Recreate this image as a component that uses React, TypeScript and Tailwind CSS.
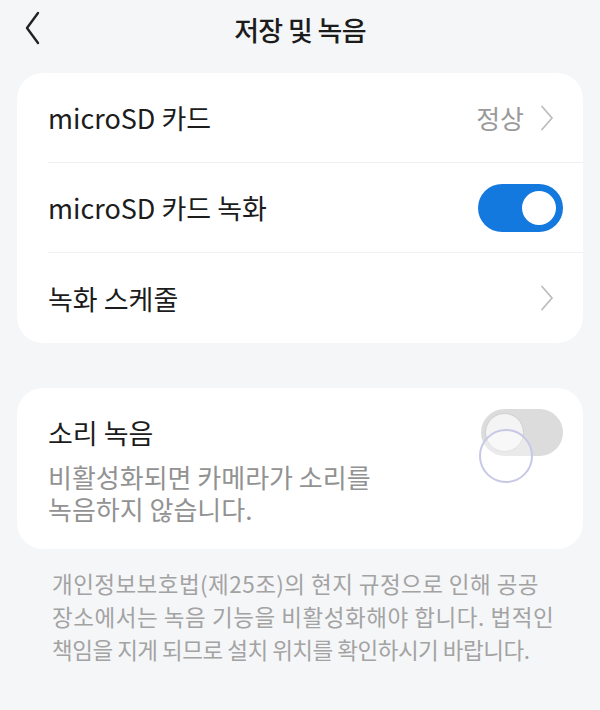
const font = { fontFamily: '"Noto Sans CJK KR", "Noto Sans", sans-serif' };

const Chevron = () => (
  <svg width="14" height="26" viewBox="0 0 14 26" fill="none" className="shrink-0">
    <path d="M2 1.5 L12 13 L2 24.5" stroke="#bdbdbd" strokeWidth="1.8" strokeLinecap="round" strokeLinejoin="round" />
  </svg>
);

const Row = ({ children, last }: { children: React.ReactNode; last?: boolean }) => (
  <div className={`flex h-[90px] items-center justify-between ${last ? "pr-[29px]" : "border-b border-[#eef0f2] pr-[29px]"}`}>
    {children}
  </div>
);

const App = () => {
  return (
    <div style={font} className="min-h-[710px] w-[600px] bg-[#f5f6f8] text-[#1c1c1c]">
      {/* header */}
      <div className="relative flex h-[58px] items-center justify-center">
        <svg className="absolute left-[24px] top-[11px]" width="16" height="34" viewBox="0 0 16 34" fill="none">
          <path d="M14 2 L3 17 L14 32" stroke="#222" strokeWidth="2.4" strokeLinecap="round" strokeLinejoin="round" />
        </svg>
        <h1 className="text-[27px] font-medium leading-none tracking-tight">저장 및 녹음</h1>
      </div>

      <div className="mx-[17px] mt-[15px] rounded-[26px] bg-white pl-[31px]">
        <Row>
          <span className="text-[27px] leading-none">microSD 카드</span>
          <span className="flex items-center gap-[16px] text-[26px] leading-none text-[#9a9a9a]">
            정상
            <Chevron />
          </span>
        </Row>
        <Row>
          <span className="text-[27px] leading-none">microSD 카드 녹화</span>
          <div className="-mr-[9px] flex h-[48px] w-[85px] items-center justify-end rounded-full bg-[#1479de] pr-[7px]">
            <div className="h-[34px] w-[34px] rounded-full bg-white" />
          </div>
        </Row>
        <Row last>
          <span className="text-[27px] leading-none">녹화 스케줄</span>
          <Chevron />
        </Row>
      </div>

      <div className="mx-[17px] mt-[45px] flex h-[161px] items-start justify-between rounded-[26px] bg-white pl-[31px] pr-[20px] pt-[29px]">
        <div>
          <div className="text-[27px] leading-[32px]">소리 녹음</div>
          <p className="mt-[12px] text-[26px] leading-[32px] text-[#929292]">
            비활성화되면 카메라가 소리를
            <br />
            녹음하지 않습니다.
          </p>
        </div>
        <div className="relative mt-[-8px] h-[47px] w-[82px] shrink-0 rounded-full bg-[#dcdcdc]">
          <div className="absolute left-[4px] top-[4px] h-[39px] w-[39px] rounded-full border border-[#cfcfd4] bg-[#f4f4f4]" />
          <div className="absolute left-[-2px] top-[20px] h-[54px] w-[54px] rounded-full border-2 border-[#c6c8e6] bg-white/40" />
        </div>
      </div>

      <div className="ml-[52px] mt-[18px] whitespace-nowrap text-[22.5px] leading-[33px] text-[#a3a3a3]">
        <p className="tracking-[0.45px]">개인정보보호법(제25조)의 현지 규정으로 인해 공공</p>
        <p className="tracking-[0.55px]">장소에서는 녹음 기능을 비활성화해야 합니다. 법적인</p>
        <p className="tracking-[-0.5px]">책임을 지게 되므로 설치 위치를 확인하시기 바랍니다.</p>
      </div>
    </div>
  );
};

export default App;
